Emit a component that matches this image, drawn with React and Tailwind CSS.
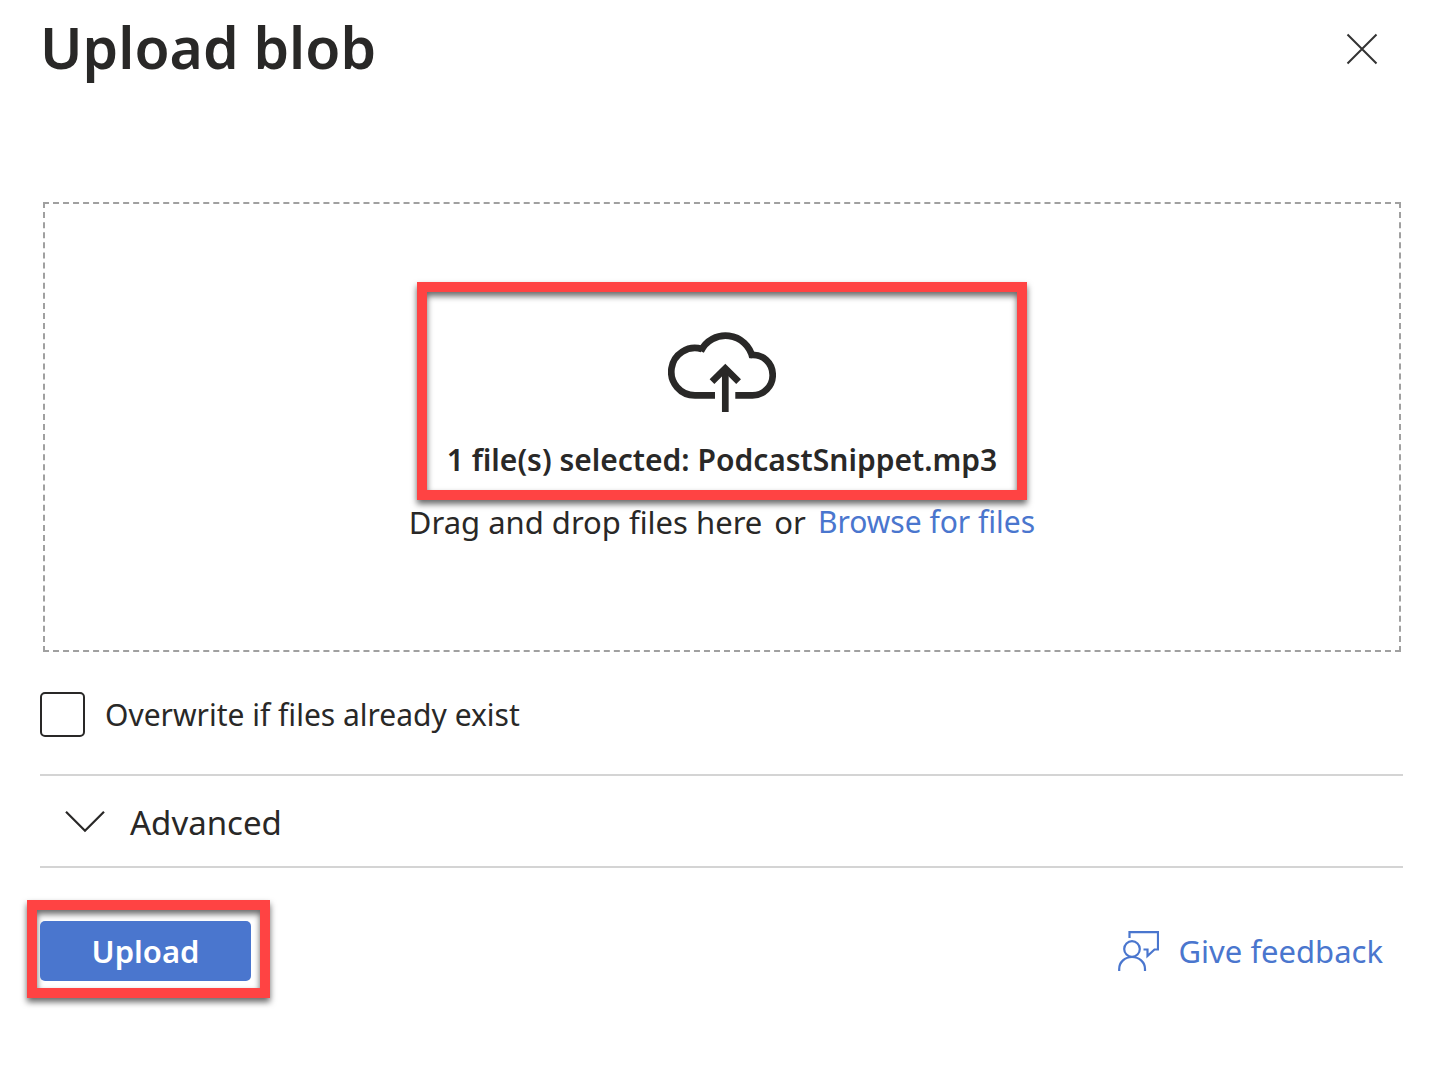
import React from "react";

function Highlight({ className }) {
  return (
    <span
      aria-hidden="true"
      className={`pointer-events-none absolute border-10 border-[#ff4343] drop-shadow-[0_4px_3px_rgba(0,0,0,0.6)] ${className}`}
    />
  );
}

function CloudUpload() {
  return (
    <svg width="108" height="82" viewBox="0 0 108 82" fill="none" stroke="#292827" strokeWidth="6.7" aria-hidden="true">
      <path d="M47 65.4H27A23.7 23.7 0 1 1 33.8 19" />
      <path d="M32.8 21.2A27.5 27.5 0 0 1 84.5 27.6" />
      <path d="M82 25.1C95 23.6 104.7 33 104.7 45.2A20.2 20.2 0 0 1 84.5 65.4H67.3" />
      <path d="M57.3 82V38" />
      <path d="M44 51.7L57.3 38.4L70.6 51.7" />
    </svg>
  );
}

function FeedbackIcon() {
  return (
    <svg width="42" height="42" viewBox="0 0 42 42" fill="none" stroke="#4a76ce" strokeWidth="2.2" aria-hidden="true">
      <circle cx="15" cy="19" r="7.8" />
      <path d="M2.2 41V39C2.2 32 8 27 15 27S28 32 28 39V41" />
      <path d="M12.5 8V2.2H41V19.5H37.5L30.5 26V19.5H26.5" />
    </svg>
  );
}

export default function App() {
  return (
    <main className="min-h-screen bg-white pr-[31px] pl-10 font-['Noto_Sans','Open_Sans',sans-serif] text-[30px] leading-11 text-[#292827]">
      <header className="flex h-[98px] items-center justify-between pr-6">
        <h1 className="pb-[3px] text-[57px] leading-none font-semibold">Upload blob</h1>
        <button type="button" aria-label="Close">
          <svg width="34" height="34" viewBox="0 0 34 34" stroke="#333" strokeWidth="2" aria-hidden="true">
            <path d="M2.5 2.5L31.5 31.5M31.5 2.5L2.5 31.5" />
          </svg>
        </button>
      </header>

      <section className="mt-26 mr-[2px] ml-[3px] flex flex-col items-center border-2 border-dashed border-[#a0a0a0] pt-[78px] pb-[106px]">
        <div className="relative flex flex-col items-center px-[30px] pt-12 pb-[18px]">
          <Highlight className="inset-0" />
          <CloudUpload />
          <p className="mt-[26px] font-semibold whitespace-nowrap">1 file(s) selected: PodcastSnippet.mp3</p>
        </div>
        <p className="flex items-center gap-3 whitespace-nowrap">
          <span className="text-[31px]">Drag and drop files here</span>
          <span className="text-[31px]">or</span>
          <a href="#browse" className="text-[#4a76ce]">Browse for files</a>
        </p>
      </section>

      <label className="mt-10 flex items-center gap-5">
        <input type="checkbox" className="size-[45px] shrink-0 appearance-none rounded-[5px] border-2 border-[#292827] checked:bg-[#4a76ce]" />
        <span>Overwrite if files already exist</span>
      </label>

      <div className="mt-[37px] border-y-2 border-[#d4d4d4]">
        <button type="button" aria-expanded="false" className="flex h-[90px] w-full items-center gap-6 pt-1 pl-6 text-left">
          <svg width="42" height="24" viewBox="0 0 42 24" fill="none" stroke="#292827" strokeWidth="2.2" aria-hidden="true">
            <path d="M2 0.8L21 19.8L40 0.8" />
          </svg>
          <span className="text-[33px]">Advanced</span>
        </button>
      </div>

      <footer className="mt-[53px] flex items-center justify-between pr-5">
        <div className="relative">
          <Highlight className="-top-[21px] -right-[19px] -bottom-[17px] -left-[13px]" />
          <button type="submit" className="relative h-[60px] w-[211px] rounded-[5px] bg-[#4a76ce] text-[31px] font-semibold text-white">
            Upload
          </button>
        </div>
        <a href="#feedback" className="flex items-center gap-5 text-[31px] text-[#4a76ce]">
          <FeedbackIcon />
          <span>Give feedback</span>
        </a>
      </footer>
    </main>
  );
}
